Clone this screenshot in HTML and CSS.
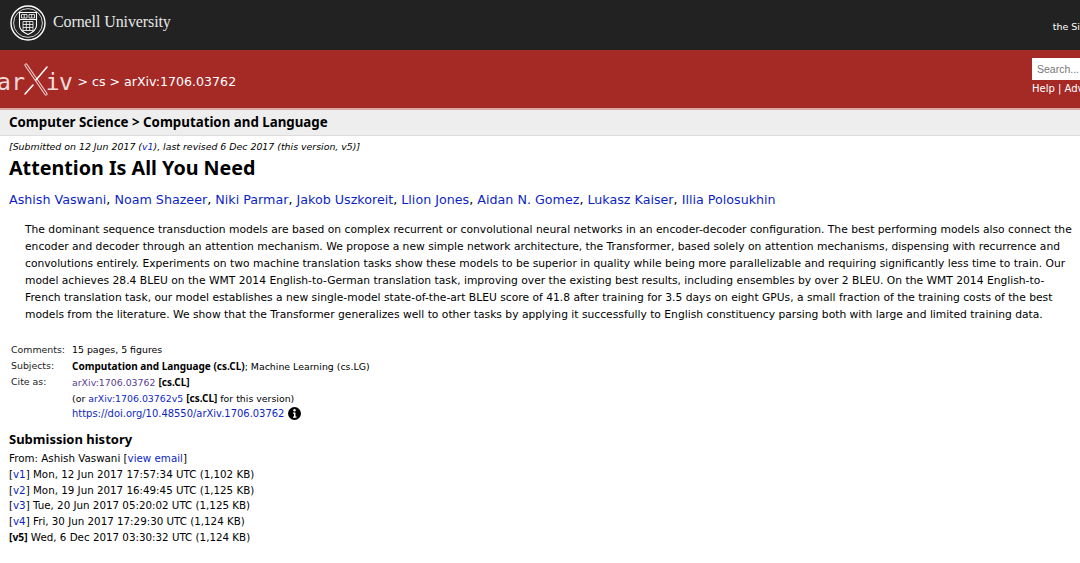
FILE: index.html
```html
<!DOCTYPE html>
<html lang="en">
<head>
    <meta charset="UTF-8">
    <meta name="viewport" content="width=device-width, initial-scale=1.0">
    <title>Attention Is All You Need</title>
    <link rel="stylesheet" href="styles.css">
</head>
<body>
<div class="cu-bar">
    <svg class="seal" width="36" height="36" viewBox="0 0 36 36" fill="none" stroke="#fff">
        <circle cx="18" cy="18" r="17" stroke-width="1.4"/>
        <circle cx="18" cy="18" r="14.4" stroke-width="0.8"/>
        <path d="M9.5 7.5h17v13c0 4.5-4 7-8.500 9-4.500-2-8.500-4.500-8.500-9z" stroke-width="1.1"/>
        <path d="M9.500 14.500h17" stroke-width="1"/>
        <path d="M11.500 9.500h5.500v3.500h-5.500zM19 9.500h5.500v3.500h-5.500zM14.200 9.500v3.500M21.700 9.500v3.500" stroke-width="0.8"/>
        <path d="M13 16.500h10v9h-10zM16.300 16.500v9M19.700 16.500v9M13 19.500h10M13 22.500h10" stroke-width="0.8"/>
    </svg>
    <span class="cu-name">Cornell University</span>
    <span class="cu-support">the Si</span>
</div>
<div class="red-bar">
    <div class="crumbs">
        <div class="logo" aria-label="arXiv">
            <span class="logo-ar">ar</span>
            <svg width="26" height="34" viewBox="0 0 26 34" fill="none" stroke-linecap="round">
                <path d="M3 2l20 29" stroke="#e9c9c5" stroke-width="3.200"/>
                <path d="M3 2l20 29" stroke="#a52a26" stroke-width="1.200"/>
                <path d="M2 31l8-9M13 17l11-13" stroke="#fff" stroke-width="1.500"/>
            </svg>
            <span class="logo-iv">iv</span>
        </div>
        <span class="path">&gt; cs &gt; arXiv:1706.03762</span>
    </div>
    <div class="search">
        <div class="search-box">Search...</div>
        <div class="search-links">Help | Advanced Search</div>
    </div>
</div>
<div class="sub-bar">Computer Science &gt; Computation and Language</div>
<div class="content">
    <div class="dateline">[Submitted on 12 Jun 2017 (<a href="#">v1</a>), last revised 6 Dec 2017 (this version, v5)]</div>
    <h1>Attention Is All You Need</h1>
    <div class="authors"><a href="#">Ashish Vaswani</a>, <a href="#">Noam Shazeer</a>, <a href="#">Niki Parmar</a>, <a href="#">Jakob Uszkoreit</a>, <a href="#">Llion Jones</a>, <a href="#">Aidan N. Gomez</a>, <a href="#">Lukasz Kaiser</a>, <a href="#">Illia Polosukhin</a></div>
    <p class="abstract">The dominant sequence transduction models are based on complex recurrent or convolutional neural networks in an encoder-decoder configuration. The best performing models also connect the<br>
    encoder and decoder through an attention mechanism. We propose a new simple network architecture, the Transformer, based solely on attention mechanisms, dispensing with recurrence and<br>
    convolutions entirely. Experiments on two machine translation tasks show these models to be superior in quality while being more parallelizable and requiring significantly less time to train. Our<br>
    model achieves 28.4 BLEU on the WMT 2014 English-to-German translation task, improving over the existing best results, including ensembles by over 2 BLEU. On the WMT 2014 English-to-<br>
    French translation task, our model establishes a new single-model state-of-the-art BLEU score of 41.8 after training for 3.5 days on eight GPUs, a small fraction of the training costs of the best<br>
    models from the literature. We show that the Transformer generalizes well to other tasks by applying it successfully to English constituency parsing both with large and limited training data.</p>
    <div class="meta">
        <div class="meta-label">Comments:</div>
        <div>15 pages, 5 figures</div>
        <div class="meta-label">Subjects:</div>
        <div><b>Computation and Language (cs.CL)</b>; Machine Learning (cs.LG)</div>
        <div class="meta-label">Cite as:</div>
        <div><a class="visited" href="#">arXiv:1706.03762</a> <b>[cs.CL]</b></div>
        <div></div>
        <div>(or <a href="#">arXiv:1706.03762v5</a> <b>[cs.CL]</b> for this version)</div>
        <div></div>
        <div class="doi"><a href="#">https://doi.org/10.48550/arXiv.1706.03762</a>
            <svg width="13" height="13" viewBox="0 0 13 13">
                <circle cx="6.500" cy="6.500" r="6.500" fill="#000"/>
                <circle cx="6.500" cy="3.300" r="1.200" fill="#fff"/>
                <path d="M5 5.500h2.500v4h1v1.200h-3.500v-1.200h1v-2.800h-1z" fill="#fff"/>
            </svg>
        </div>
    </div>
    <h2>Submission history</h2>
    <div class="history">
        <div>From: Ashish Vaswani [<a href="#">view email</a>]</div>
        <div>[<a href="#">v1</a>] Mon, 12 Jun 2017 17:57:34 UTC (1,102 KB)</div>
        <div>[<a href="#">v2</a>] Mon, 19 Jun 2017 16:49:45 UTC (1,125 KB)</div>
        <div>[<a href="#">v3</a>] Tue, 20 Jun 2017 05:20:02 UTC (1,125 KB)</div>
        <div>[<a href="#">v4</a>] Fri, 30 Jun 2017 17:29:30 UTC (1,124 KB)</div>
        <div><b>[v5]</b> Wed, 6 Dec 2017 03:30:32 UTC (1,124 KB)</div>
    </div>
</div>
</body>
</html>
```
FILE: styles.css
```css
html, body {
    height: 563px;
    overflow: hidden;
}
body {
    margin: 0;
    background: #fff;
    color: #000;
    font-family: "DejaVu Sans", Verdana, sans-serif;
    font-size: 10.5px;
}
a {
    color: #0d1fc4;
    text-decoration: none;
}
a.visited {
    color: #5a3d94;
}
.cu-bar {
    display: flex;
    align-items: center;
    height: 50px;
    background: #222;
    color: #fff;
    padding: 0 0 0 10px;
    white-space: nowrap;
}
.seal {
    margin-top: -5px;
}
.cu-name {
    font-family: "Liberation Serif", serif;
    font-size: 16px;
    letter-spacing: -0.1px;
    color: #e8e8e8;
    margin: -7px 0 0 7px;
}
.cu-support {
    margin-left: auto;
    font-size: 9.500px;
    margin-top: 2px;
}
.red-bar {
    display: flex;
    justify-content: space-between;
    height: 58px;
    background: #a52a26;
    border-bottom: 2px solid #d9a9a6;
    color: #fff;
    overflow: hidden;
    white-space: nowrap;
}
.crumbs {
    display: flex;
    align-items: center;
    padding-top: 5px;
}
.logo {
    display: flex;
    align-items: center;
    margin-left: -3px;
    font-family: "DejaVu Sans Mono", monospace;
    font-size: 23px;
    color: #f2dcda;
}
.logo-ar {
    letter-spacing: 0.5px;
}
.logo-iv {
    letter-spacing: -0.5px;
}
.logo svg {
    margin: -3px -3px 0 -3px;
}
.path {
    font-size: 12.600px;
    margin-left: 5px;
}
.search {
    width: 48px;
    padding-top: 8px;
    overflow: hidden;
}
.search-box {
    width: 80px;
    height: 22px;
    line-height: 22px;
    background: #fff;
    color: #777;
    font-family: "Liberation Sans", Arial, sans-serif;
    font-size: 10.5px;
    padding-left: 5px;
}
.search-links {
    font-size: 10px;
    margin-top: 3px;
}
.sub-bar {
    height: 25px;
    line-height: 25px;
    background: #eee;
    border-bottom: 1px solid #ddd;
    padding-left: 9px;
    font-family: "Noto Sans", sans-serif;
    font-size: 13.300px;
    font-weight: bold;
}
.content {
    padding: 4px 0 0 9px;
    white-space: nowrap;
}
.dateline {
    font-style: italic;
    font-size: 9.400px;
    line-height: 13px;
}
h1 {
    margin: 2px 0 0;
    font-family: "Noto Sans", sans-serif;
    font-size: 19.700px;
    line-height: 26px;
}
.authors {
    margin-top: 10px;
    font-size: 12.700px;
    line-height: 18px;
}
.abstract {
    margin: 12px 0 0 16px;
    font-size: 10.730px;
    line-height: 17px;
}
.meta {
    display: grid;
    grid-template-columns: 61px auto;
    grid-auto-rows: 16px;
    justify-content: start;
    margin: 19px 0 0 2px;
    line-height: 16px;
    font-size: 9.400px;
}
.meta b {
    font-family: "Noto Sans", sans-serif;
    font-size: 10px;
}
.meta-label {
    color: #222;
}
.doi a {
    font-size: 9.950px;
}
.doi svg {
    vertical-align: -3px;
    margin-left: 1px;
}
h2 {
    margin: 8px 0 0;
    font-family: "Noto Sans", sans-serif;
    font-size: 13px;
    line-height: 18px;
}
.history {
    margin-top: 3px;
    font-size: 10.300px;
    line-height: 15.800px;
}
.history b {
    font-family: "Noto Sans", sans-serif;
}
```
